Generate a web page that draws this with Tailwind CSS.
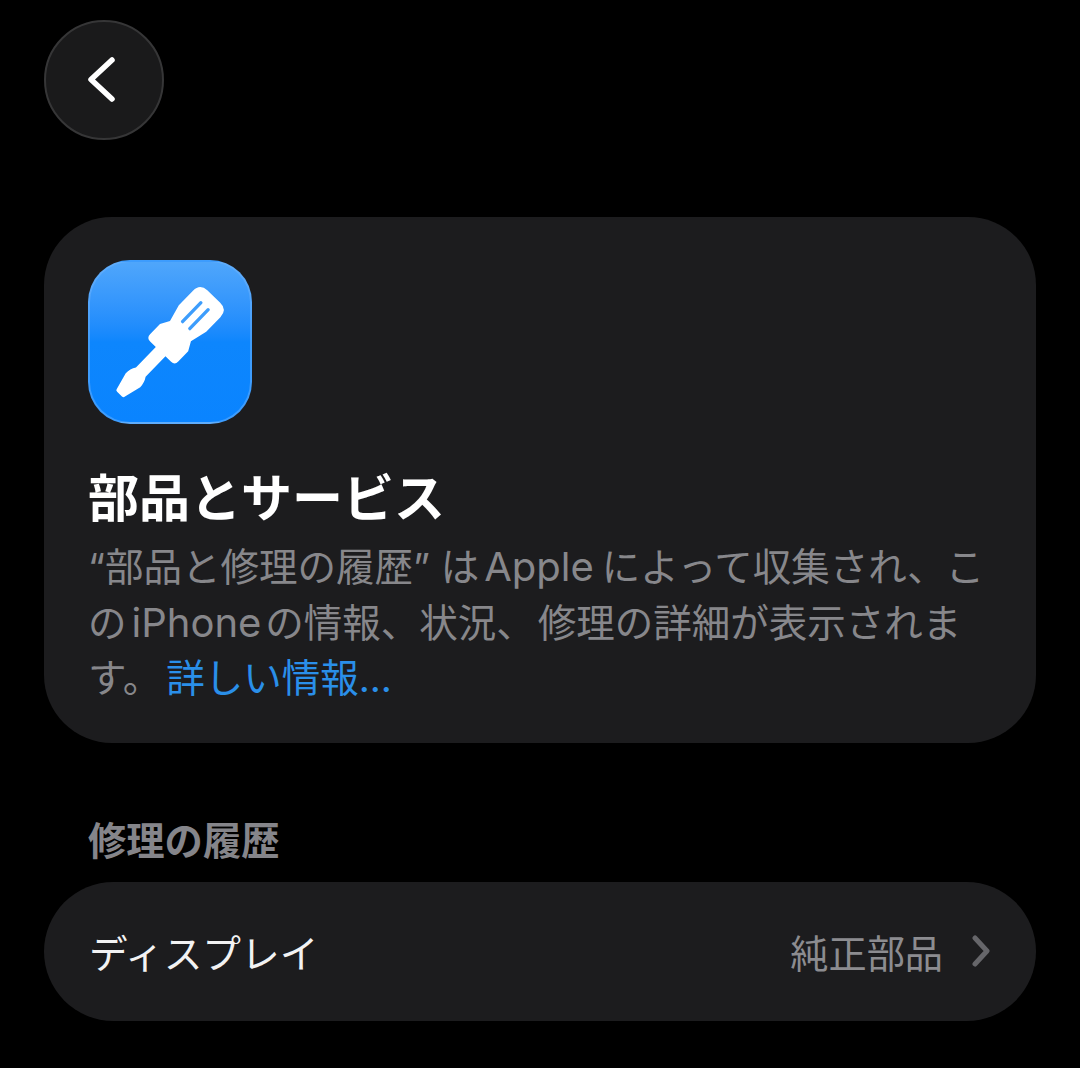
<!DOCTYPE html>
<html lang="ja">
<head>
  <meta charset="utf-8">
  <title>部品とサービス</title>
  <script src="https://cdn.jsdelivr.net/npm/@tailwindcss/browser@4"></script>
</head>
<body class="bg-black text-white min-h-screen font-['Inter','Noto_Sans_CJK_JP',sans-serif]">
  <div class="w-[1080px] h-[1068px] overflow-hidden px-[44px] pt-[20px]">
    <!-- back button -->
    <button class="w-[120px] h-[120px] rounded-full bg-[#1a1a1b] border-2 border-[#363637] flex items-center justify-center">
      <svg width="34" height="50" viewBox="0 0 34 50" fill="none" stroke="#fff" stroke-width="5.5" stroke-linecap="round" stroke-linejoin="round">
        <path d="M25 5 L4 24.5 L25 44" />
      </svg>
    </button>

    <!-- info card -->
    <section class="mt-[77px] h-[526px] rounded-[68px] bg-[#1c1c1e] pl-[44px] pr-[40px] pt-[43px]">
      <div class="w-[164px] h-[164px] rounded-[42px] bg-gradient-to-b from-[#4fa6fb] via-[#0d86fd] via-50% to-[#0a84ff] border-2 border-[#6fb4fb]/50 overflow-hidden">
        <svg width="160" height="160" viewBox="0 0 160 160">
          <g transform="translate(77 83) rotate(44) scale(1.12 1.02) translate(0 -66)">
            <path fill="#fff" d="M-8 0 L8 0 Q17 0 17 10 L17 30 L13 47 L17.5 56 L17.5 70 Q17.5 75 13 75 L6 75 L6 103 Q9 108 9 114 L5 131 Q5 133 3 133 L-3 133 Q-5 133 -5 131 L-9 114 Q-9 108 -6 103 L-6 75 L-13 75 Q-17.5 75 -17.5 70 L-17.5 56 L-13 47 L-17 30 L-17 10 Q-17 0 -8 0 Z" />
            <path fill="none" stroke="#3d9dfc" stroke-width="3" stroke-linecap="round" d="M-4.5 13 L-4.5 39 M4.5 13 L4.5 39" />
          </g>
        </svg>
      </div>
      <h1 class="mt-[40px] text-[51px] leading-[70px] font-bold text-white">部品とサービス</h1>
      <p class="mt-[6px] text-[38.5px] leading-[55.5px] text-[#87878b] whitespace-nowrap">“部品と修理の履歴” は<span class="text-[40px] leading-none ml-[5px] mr-[8px]">Apple</span>によって収集され、こ<br>の<span class="text-[40px] leading-none ml-[5px] mr-[4px]">iPhone</span>の情報、状況、<span class="ml-[3px]">修理の詳細が表示されま</span><br>す。<span class="text-[#2a8fe9] ml-[5px]">詳しい情報...</span></p>
    </section>

    <!-- repair history -->
    <h2 class="mt-[71px] pl-[44px] text-[38.3px] leading-[54px] font-bold text-[#85858a]">修理の履歴</h2>
    <div class="mt-[14px] h-[139px] rounded-[70px] bg-[#1c1c1e] pl-[45px] pr-[46px] pt-[6px] flex items-center justify-between">
      <span class="text-[38.7px] text-[#f2f2f3]">ディスプレイ</span>
      <span class="flex items-center gap-[29px]">
        <span class="text-[38.2px] text-[#8c8c90]">純正部品</span>
        <svg class="-mt-[6px]" width="18" height="32" viewBox="0 0 18 32" fill="none" stroke="#66666a" stroke-width="5" stroke-linecap="round" stroke-linejoin="round">
          <path d="M3 3 L15 16 L3 29" />
        </svg>
      </span>
    </div>
  </div>
</body>
</html>
